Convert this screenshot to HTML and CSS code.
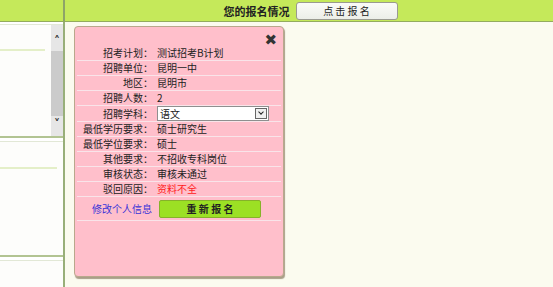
FILE: index.html
```html
<!DOCTYPE html>
<html lang="zh-CN">
<head>
  <meta charset="UTF-8" />
  <title>您的报名情况</title>
  <link rel="stylesheet" href="styles.css">
</head>
<body>
  <div class="page">
    <div class="side-head"></div>
    <div class="main-head">
      <span class="head-title">您的报名情况</span>
      <button class="head-btn">点 击 报 名</button>
    </div>

    <div class="side">
      <div class="side-panel first">
        <div class="side-list">
          <div class="side-item"></div>
        </div>
        <div class="scrollbar">
          <span class="arrow up">&#x2C4;</span>
          <span class="thumb"></span>
          <span class="arrow down">&#x2C5;</span>
        </div>
      </div>
      <div class="side-panel">
        <div class="side-item tall"></div>
      </div>
      <div class="side-panel last"></div>
    </div>

    <div class="main">
      <div class="card">
        <span class="close">&#x2716;</span>
        <table class="info">
          <tr><th>招考计划：</th><td>测试招考B计划</td></tr>
          <tr><th>招聘单位：</th><td>昆明一中</td></tr>
          <tr><th>地区：</th><td>昆明市</td></tr>
          <tr><th>招聘人数：</th><td>2</td></tr>
          <tr>
            <th>招聘学科：</th>
            <td>
              <div class="select"><span>语文</span><i class="caret"></i></div>
            </td>
          </tr>
          <tr><th>最低学历要求：</th><td>硕士研究生</td></tr>
          <tr><th>最低学位要求：</th><td>硕士</td></tr>
          <tr><th>其他要求：</th><td>不招收专科岗位</td></tr>
          <tr><th>审核状态：</th><td>审核未通过</td></tr>
          <tr><th>驳回原因：</th><td class="red">资料不全</td></tr>
          <tr class="actions">
            <th><a href="#">修改个人信息</a></th>
            <td><button class="redo">重 新 报 名</button></td>
          </tr>
        </table>
      </div>
    </div>
  </div>
</body>
</html>
```

FILE: styles.css
```css
body {
  margin: 0;
  font-family: "Noto Sans CJK SC", "DejaVu Sans", sans-serif;
  font-size: 10px;
  color: #222;
  background: #fbfbef;
}
.page {
  display: grid;
  grid-template-columns: 65px 1fr;
  grid-template-rows: 22px 265px;
}

/* header */
.side-head, .main-head {
  background: #c5e95a;
  border-bottom: 1px solid #93ab5e;
}
.side-head { border-right: 2px solid #8ea468; }
.main-head {
  display: flex; align-items: center; justify-content: center;
  gap: 6px;
}
.head-title {
  font-weight: bold; font-size: 11px; color: #222;
  margin-left: 3px;
}
.head-btn {
  width: 102px; height: 18px; padding: 0;
  font-family: inherit; font-size: 10px; color: #222;
  background: linear-gradient(#fbfbf8, #eceee8);
  border: 1px solid #9a9a90; border-radius: 3px;
}

/* left column */
.side {
  background: #ffffff;
  border-right: 2px solid #98af78;
  display: flex; flex-direction: column;
  padding-top: 2px;
}
.side-panel {
  height: 113px;
  border-top: 1px solid #e2e8d6;
  border-bottom: 2px solid #b2c492;
  margin-bottom: 3px;
  display: flex;
  background: #fdfdfb;
}
.side-panel.first { height: 111px; }
.side-panel.last { flex: 1; margin-bottom: 0; border-bottom: 0; }
.side-list { flex: 1; }
.side-item {
  height: 24px;
  border-bottom: 2px solid #e4efc8;
  margin-right: 6px;
}
.side-item.tall { flex: 1; height: 25px; align-self: flex-start; }
.scrollbar {
  width: 12px;
  background: #e6e6e6;
  display: flex; flex-direction: column; align-items: center;
}
.arrow { font-size: 12px; line-height: 14px; color: #333; font-weight: bold; }
.arrow.up { margin-top: 8px; }
.thumb { width: 12px; height: 68px; background: #cbcbcb; margin-top: 4px; }
.arrow.down { margin-top: auto; margin-bottom: 6px; }

/* main area */
.main { padding: 4px 0 0 9px; }
.card {
  position: relative;
  width: 204px;
  height: 241px;
  padding: 8px 2px 0 2px;
  background: #ffbfcb;
  border: 1px solid #b9a88c;
  border-radius: 4px;
  box-shadow: 1px 2px 1px #a99e88;
}
.close {
  position: absolute; right: 6px; top: 1px;
  font-size: 15px; color: #333;
}
.info {
  width: 100%;
  border-collapse: collapse;
  margin-top: 11px;
}
.info th, .info td {
  height: 14px; padding: 0;
  border-bottom: 1px solid #f9e4e9;
  font-weight: normal; white-space: nowrap;
  line-height: 14px;
}
.info th { text-align: right; width: 76px; padding-right: 2px; }
.info td { padding-left: 2px; }
.red { color: #ff2020; }
.select {
  width: 108px; height: 13px;
  background: #fff; border: 1px solid #8f8f8f;
  display: flex; align-items: center; justify-content: space-between;
  padding-left: 2px;
}
.caret {
  width: 12px; height: 11px; margin-right: 1px;
  border: 1px solid #666; box-sizing: border-box;
  background: #f0f0f0;
  position: relative;
}
.caret::after {
  content: ""; position: absolute; left: 3px; top: 1px;
  width: 3px; height: 3px;
  border-right: 1.5px solid #222; border-bottom: 1.5px solid #222;
  transform: rotate(45deg);
}
.actions th, .actions td { height: 23px; border-bottom: 1px solid #f9e4e9; }
.actions a { color: #3a33d8; text-decoration: none; margin-right: 1px; }
.redo {
  width: 102px; min-width: 102px; height: 18px; padding: 0;
  font-family: inherit; font-size: 10px; font-weight: bold; color: #222;
  background: #9ce024; border: 1px solid #86b22a; border-radius: 2px;
  margin-left: 2px;
}
```
